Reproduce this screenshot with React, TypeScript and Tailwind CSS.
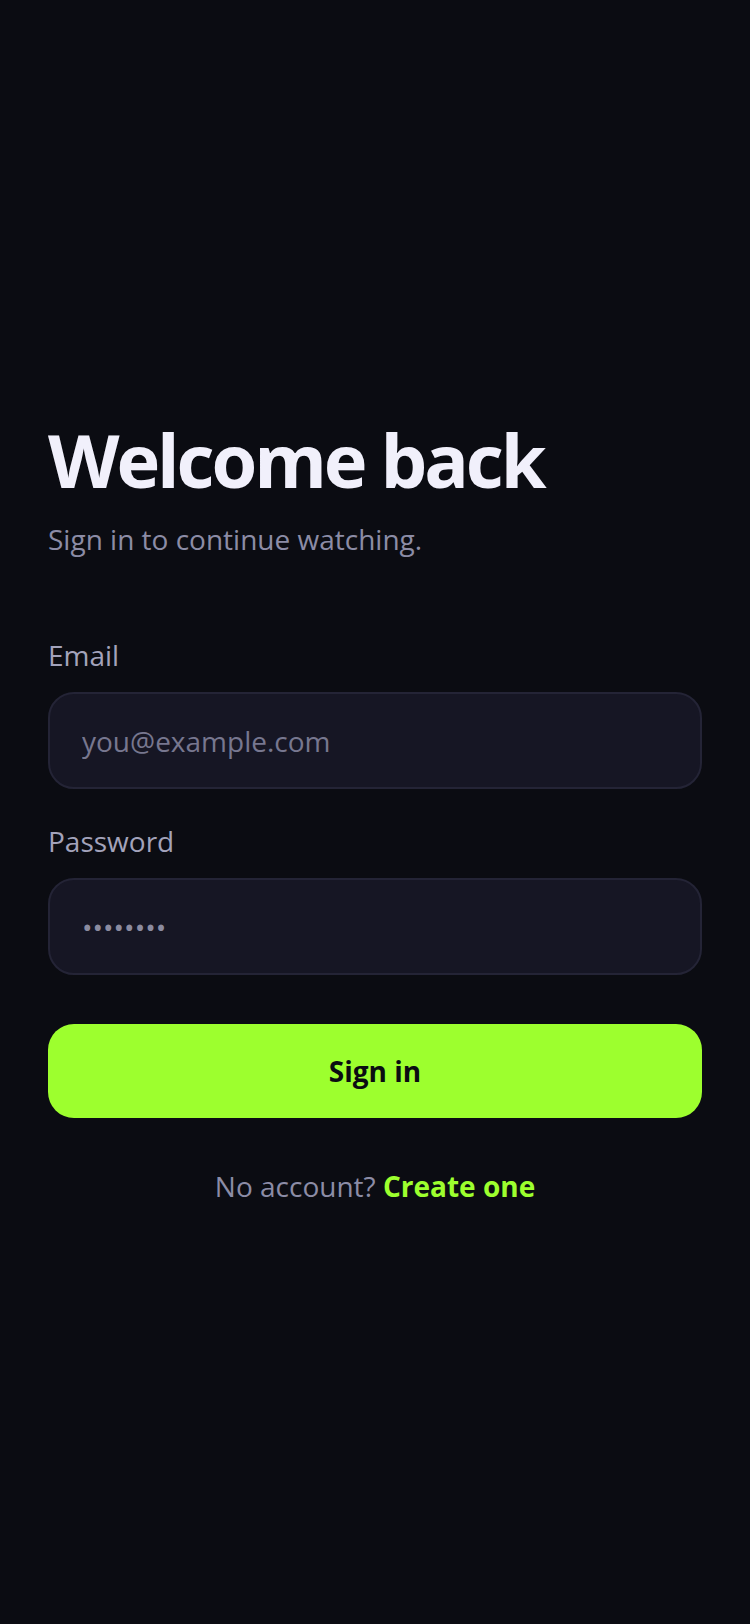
import { useState } from "react";

const SignIn = () => {
  const [email, setEmail] = useState("");
  const [password, setPassword] = useState("");

  return (
    <div
      className="min-h-screen w-full bg-[#0b0c12] flex flex-col justify-center px-12"
      style={{ fontFamily: '"Open Sans", "Noto Sans", sans-serif' }}
    >
      <h1 className="text-[74px] leading-[84px] font-bold tracking-[-0.042em] text-[#f1f0fb]">
        Welcome back
      </h1>
      <p className="mt-[17px] text-[28px] leading-[40px] text-[#8c8ca6]">
        Sign in to continue watching.
      </p>

      <form
        className="mt-[76px] flex flex-col"
        onSubmit={(e) => e.preventDefault()}
      >
        <label className="text-[28px] leading-[40px] text-[#a3a3bb]">Email</label>
        <input
          type="email"
          value={email}
          onChange={(e) => setEmail(e.target.value)}
          placeholder="you@example.com"
          className="mt-[17px] h-[97px] w-full rounded-[26px] border-2 border-[#242436] bg-[#161624] px-8 text-[28px] text-[#f1f0fb] placeholder:text-[#77778f] outline-none"
        />

        <label className="mt-8 text-[28px] leading-[40px] text-[#a3a3bb]">Password</label>
        <input
          type="password"
          value={password}
          onChange={(e) => setPassword(e.target.value)}
          placeholder="••••••••"
          className="mt-[17px] h-[97px] w-full rounded-[26px] border-2 border-[#242436] bg-[#161624] px-8 text-[28px] text-[#f1f0fb] placeholder:text-[#8b8ba0] outline-none"
        />

        <button
          type="submit"
          className="mt-[49px] h-[94px] w-full rounded-[26px] bg-[#9dff2e] text-[28px] font-bold text-[#0b0c12]"
        >
          Sign in
        </button>
      </form>

      <p className="mt-[48px] text-center text-[28px] leading-[40px] text-[#8c8ca6]">
        No account? <a className="font-bold text-[#9dff2e]">Create one</a>
      </p>
    </div>
  );
};

export default SignIn;
